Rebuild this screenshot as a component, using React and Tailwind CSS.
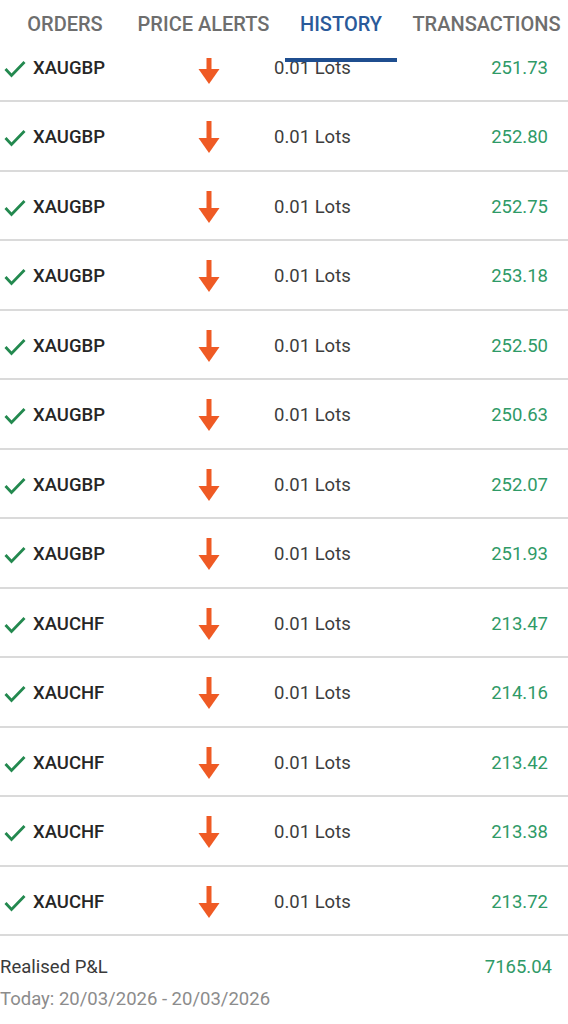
const rows = [
  { sym: "XAUGBP", pnl: "251.73" },
  { sym: "XAUGBP", pnl: "252.80" },
  { sym: "XAUGBP", pnl: "252.75" },
  { sym: "XAUGBP", pnl: "253.18" },
  { sym: "XAUGBP", pnl: "252.50" },
  { sym: "XAUGBP", pnl: "250.63" },
  { sym: "XAUGBP", pnl: "252.07" },
  { sym: "XAUGBP", pnl: "251.93" },
  { sym: "XAUCHF", pnl: "213.47" },
  { sym: "XAUCHF", pnl: "214.16" },
  { sym: "XAUCHF", pnl: "213.42" },
  { sym: "XAUCHF", pnl: "213.38" },
  { sym: "XAUCHF", pnl: "213.72" },
]

function Check() {
  return (
    <svg width="22" height="18" viewBox="0 0 22 18" className="shrink-0">
      <polyline points="1.5,9 7.5,15.5 20.5,2" fill="none" stroke="#23894f" strokeWidth="2.8" strokeLinejoin="miter" />
    </svg>
  )
}

function DownArrow() {
  return (
    <svg width="22" height="32" viewBox="0 0 22 32" className="mb-[2px] shrink-0">
      <rect x="8.5" y="0" width="5" height="19" fill="#ef5a24" />
      <polygon points="0.5,17 21.5,17 11,32" fill="#ef5a24" />
    </svg>
  )
}

function Tabs() {
  return (
    <div className="absolute top-0 left-0 z-10 flex h-[58px] w-full items-start bg-white pt-[12px] text-[20px] font-medium leading-[24px] text-[#6e6e6e]">
      <div className="w-[130px] shrink-0 text-center">ORDERS</div>
      <div className="w-[147px] shrink-0 text-center">PRICE ALERTS</div>
      <div className="relative h-[46px] w-[128px] shrink-0 text-center text-[#2a5a9a]">
        HISTORY
        <div className="absolute left-[8px] top-[46px] h-[4px] w-[112px] bg-[#1f4e8f]" />
      </div>
      <div className="w-[163px] shrink-0 whitespace-nowrap text-center">TRANSACTIONS</div>
    </div>
  )
}

export default function App() {
  return (
    <div className="relative h-[1024px] w-[568px] overflow-hidden bg-white" style={{ fontFamily: "Roboto, 'Noto Sans', sans-serif" }}>
      <Tabs />
      <div className="pt-[32.5px]">
        {rows.map((r, i) => (
          <div key={i} className="flex h-[69.5px] items-center border-b-2 border-[#dadada] pt-[5px] text-[18.5px]">
            <div className="flex w-[198px] shrink-0 items-center pl-[4px]">
              <Check />
              <span className="ml-[7px] font-medium text-[#262626]">{r.sym}</span>
            </div>
            <DownArrow />
            <span className="ml-[54px] text-[#3d3d3d]">0.01 Lots</span>
            <span className="flex-1 pr-[20px] text-right text-[#2f9a67]">{r.pnl}</span>
          </div>
        ))}
      </div>
      <div className="pt-[16px] text-[18.5px]">
        <div className="flex justify-between pr-[16px] leading-[31px]">
          <span className="text-[#3a3a3a]">Realised P&amp;L</span>
          <span className="text-[#2f9a67]">7165.04</span>
        </div>
        <div className="leading-[32px] text-[#8c8c8c]">Today: 20/03/2026 - 20/03/2026</div>
      </div>
    </div>
  )
}
